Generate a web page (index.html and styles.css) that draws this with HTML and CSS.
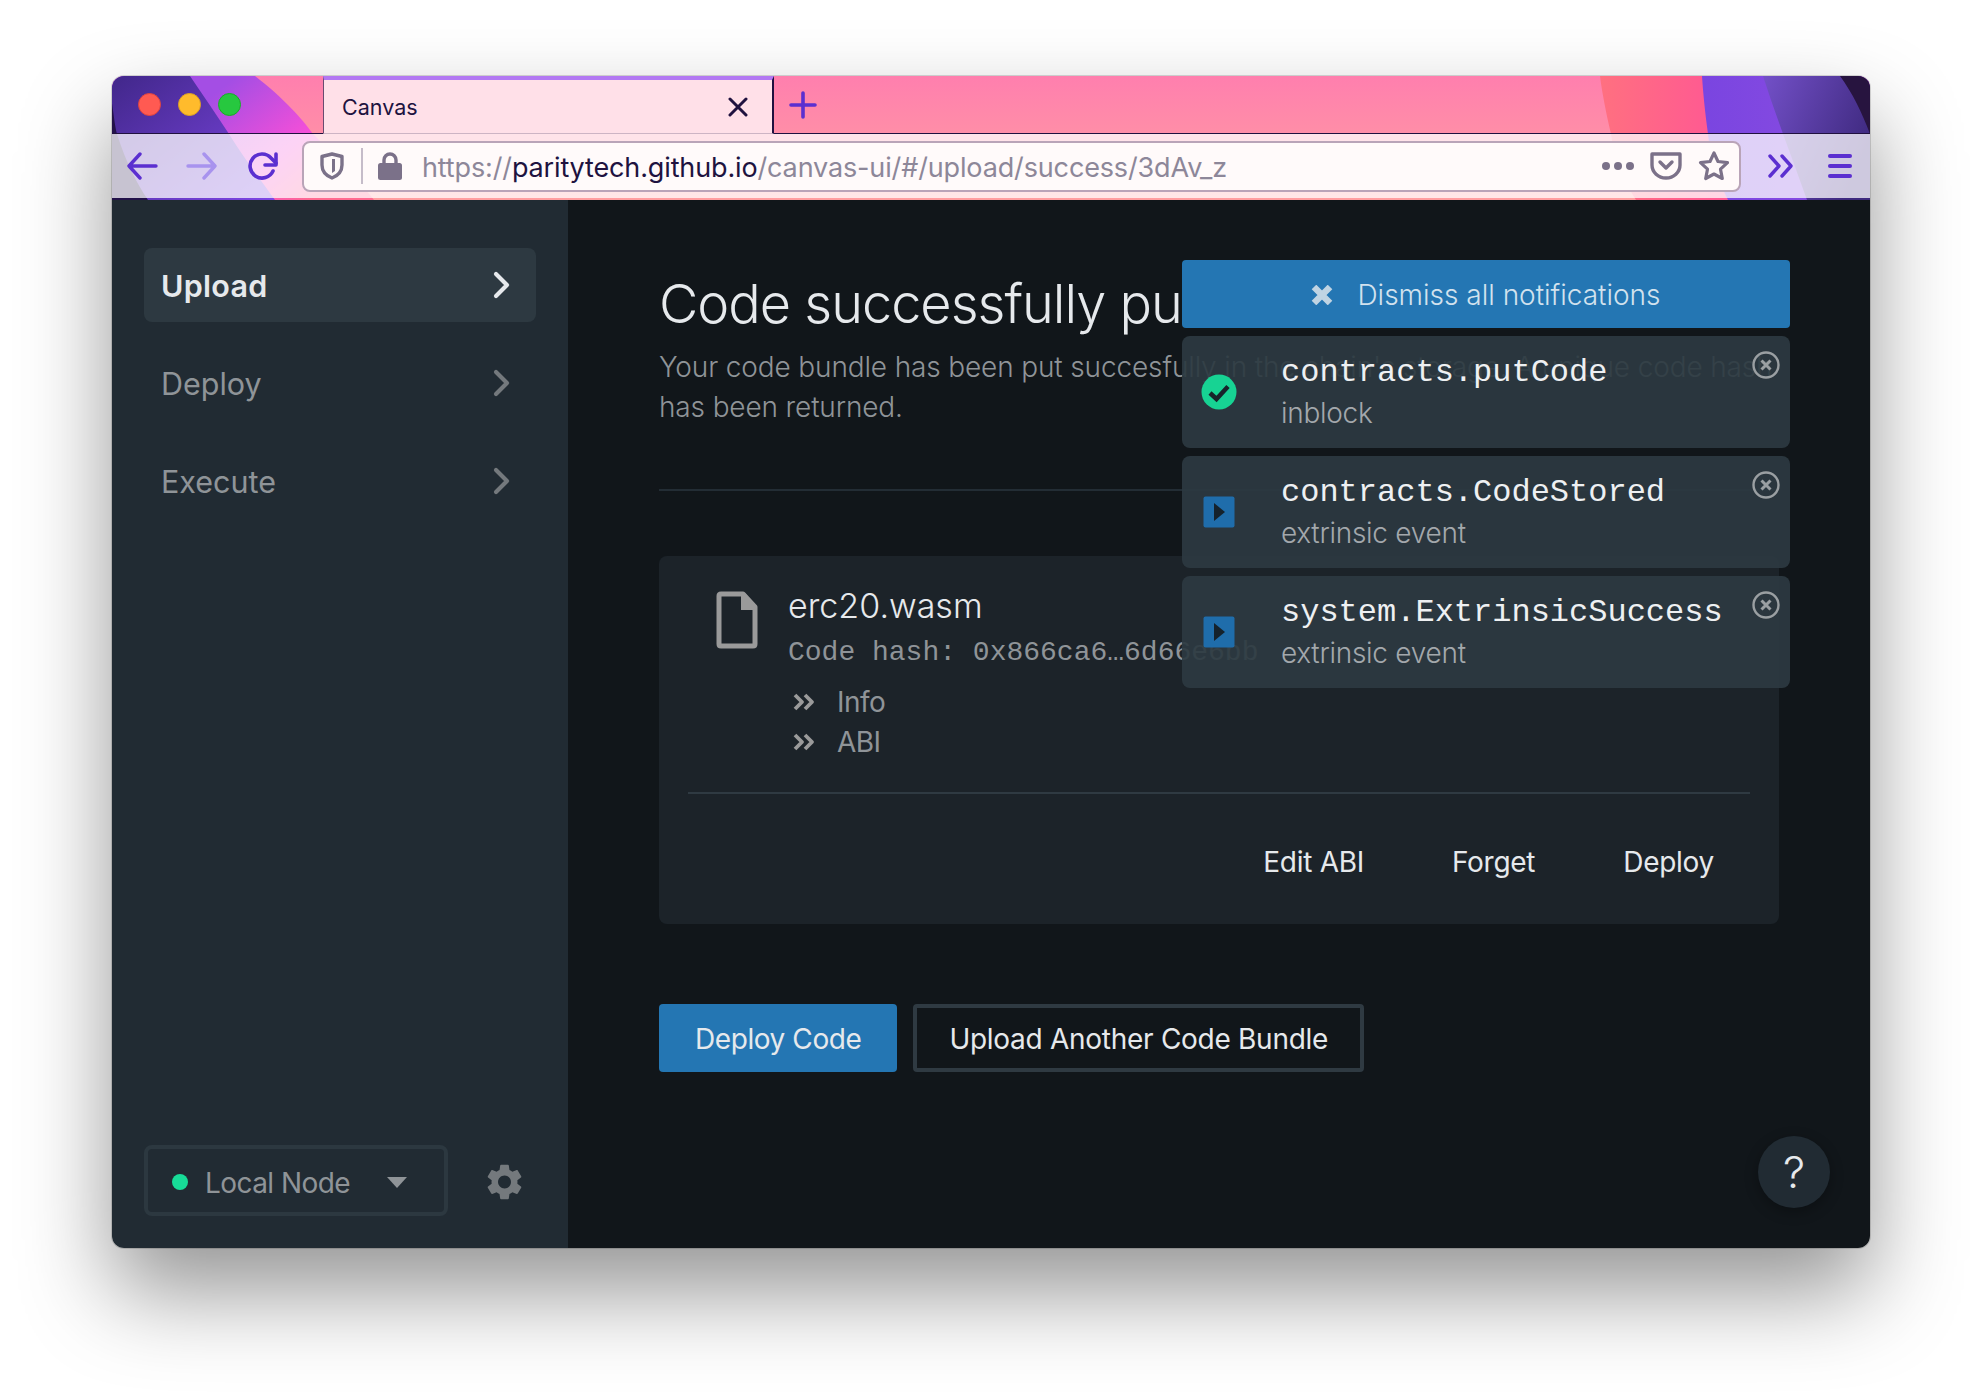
FILE: index.html
```html
<!DOCTYPE html>
<html lang="en">
<head>
<meta charset="UTF-8">
<meta name="viewport" content="width=device-width, initial-scale=1.0">
<title>Canvas</title>
<link rel="stylesheet" href="styles.css">
</head>
<body>

<div class="window">
    <header class="chrome">
        <svg class="chrome-art" viewBox="0 0 1758 122" preserveAspectRatio="none">
            <defs>
                <linearGradient id="artBase" x1="0" y1="0" x2="0" y2="1"><stop offset="0" stop-color="#ff7fae"/><stop offset="1" stop-color="#ff9fa0"/></linearGradient>
                <linearGradient id="artMagenta" x1="0" y1="0" x2="1" y2="0.6"><stop offset="0.35" stop-color="#a44ee4"/><stop offset="0.75" stop-color="#f44fd8"/><stop offset="1" stop-color="#ff6a90"/></linearGradient>
                <linearGradient id="artPurple" x1="0" y1="0" x2="1" y2="1"><stop offset="0" stop-color="#41278a"/><stop offset="1" stop-color="#7f47e6"/></linearGradient>
                <linearGradient id="artCoral" x1="0" y1="0" x2="1" y2="0"><stop offset="0" stop-color="#ff7080"/><stop offset="0.7" stop-color="#ff4a9e"/></linearGradient>
                <linearGradient id="artViolet" x1="0" y1="0" x2="1" y2="0"><stop offset="0" stop-color="#7a45e0"/><stop offset="1" stop-color="#8c4de2"/></linearGradient>
                <linearGradient id="artDusk" x1="0" y1="0" x2="1" y2="0.5"><stop offset="0" stop-color="#7350c8"/><stop offset="1" stop-color="#3f2a80"/></linearGradient>
            </defs>
            <rect width="1758" height="122" fill="url(#artBase)"/>
            <path d="M0 0H143C172 22 190 42 201 57C225 80 245 100 262 122H0Z" fill="url(#artMagenta)"/>
            <path d="M0 0H78C92 20 104 38 117 57C135 85 150 104 163 122H0Z" fill="url(#artPurple)"/>
            <path d="M0 27C2 40 3 50 5 57C14 85 24 104 36 122H0Z" fill="#23124a"/>
            <path d="M1488 0H1758V122H1524C1510 100 1502 78 1499 57C1494 36 1490 16 1488 0Z" fill="url(#artCoral)"/>
            <path d="M1590 0H1758V122H1616C1605 100 1598 78 1596 57C1593 36 1591 16 1590 0Z" fill="url(#artViolet)"/>
            <path d="M1651 0H1758V122H1695C1680 80 1664 40 1651 0Z" fill="url(#artDusk)"/>
            <path d="M1728 0H1758V57C1750 36 1740 16 1728 0Z" fill="#27143f"/>
        </svg>

        <div class="tabstrip">
            <div class="lights">
                <span class="light light-red"></span>
                <span class="light light-yellow"></span>
                <span class="light light-green"></span>
            </div>
            <div class="tab">
                <span class="tab-title">Canvas</span>
                <svg class="tab-close" viewBox="0 0 20 20"><path d="M2 2L18 18M18 2L2 18" fill="none" stroke="#20123f" stroke-width="3" stroke-linecap="round"/></svg>
            </div>
            <svg class="tab-new" viewBox="0 0 28 28"><path d="M14 2V26M2 14H26" fill="none" stroke="#5b2fd0" stroke-width="3.6" stroke-linecap="round"/></svg>
        </div>

        <div class="toolbar">
            <svg class="tool tool-back" viewBox="0 0 32 28"><path d="M3 14H30M14 2L3 14L14 26" fill="none" stroke="#5b2fd0" stroke-width="3.4" stroke-linecap="round" stroke-linejoin="round"/></svg>
            <svg class="tool tool-forward" viewBox="0 0 32 28"><path d="M2 14H29M18 2L29 14L18 26" fill="none" stroke="#a893ee" stroke-width="3.4" stroke-linecap="round" stroke-linejoin="round"/></svg>
            <svg class="tool tool-reload" viewBox="0 0 32 28"><path d="M26 19A12 12 0 1 1 24 6L29 11" fill="none" stroke="#5b2fd0" stroke-width="3.6" stroke-linecap="round"/><path d="M29 2V13H18" fill="none" stroke="#5b2fd0" stroke-width="3.6" stroke-linecap="round" stroke-linejoin="round"/></svg>
            <div class="urlbar">
                <svg class="url-shield" viewBox="0 0 24 28"><path d="M12 2L22 4.500V13C22 20 17 24 12 26C7 24 2 20 2 13V4.500Z" fill="none" stroke="#7b7189" stroke-width="3.4" stroke-linejoin="round"/><path d="M12 7H15V19L12 21Z" fill="#7b7189"/></svg>
                <span class="url-sep"></span>
                <svg class="url-lock" viewBox="0 0 24 28"><path d="M6 12V8A6 6 0 0 1 18 8V12" fill="none" stroke="#7b7189" stroke-width="3.4"/><rect x="0" y="11" width="24" height="17" rx="2.500" fill="#7b7189"/></svg>
                <span class="url-text">https://<b>paritytech.github.io</b>/canvas-ui/#/upload/success/3dAv_z</span>
                <span class="url-dots"><i></i><i></i><i></i></span>
                <svg class="url-pocket" viewBox="0 0 32 28"><path d="M2 2H30V13A14 13 0 0 1 2 13Z" fill="none" stroke="#7b7189" stroke-width="3.4" stroke-linejoin="round"/><path d="M10 10L16 16L22 10" fill="none" stroke="#7b7189" stroke-width="3.4" stroke-linecap="round" stroke-linejoin="round"/></svg>
                <svg class="url-star" viewBox="0 0 32 32"><path d="M16 3L20 11.500L29.500 12.700L22.500 19.200L24.300 28.500L16 24L7.700 28.500L9.500 19.200L2.500 12.700L12 11.500Z" fill="none" stroke="#7b7189" stroke-width="3.2" stroke-linejoin="round"/></svg>
            </div>
            <svg class="tool-more" viewBox="0 0 26 24"><path d="M2 2L11 12L2 22M14 2L23 12L14 22" fill="none" stroke="#5b2fd0" stroke-width="3.4" stroke-linecap="round" stroke-linejoin="round"/></svg>
            <span class="tool-menu"><i></i><i></i><i></i></span>
        </div>
    </header>

    <div class="app">
        <aside class="sidebar">
            <nav class="nav">
                <a class="nav-item nav-item-active">Upload<svg class="nav-chevron" viewBox="0 0 16 28"><path d="M2.500 3L13.500 14L2.500 25" fill="none" stroke="currentColor" stroke-width="4.200" stroke-linecap="round" stroke-linejoin="round"/></svg></a>
                <a class="nav-item">Deploy<svg class="nav-chevron" viewBox="0 0 16 28"><path d="M2.500 3L13.500 14L2.500 25" fill="none" stroke="currentColor" stroke-width="4.200" stroke-linecap="round" stroke-linejoin="round"/></svg></a>
                <a class="nav-item">Execute<svg class="nav-chevron" viewBox="0 0 16 28"><path d="M2.500 3L13.500 14L2.500 25" fill="none" stroke="currentColor" stroke-width="4.200" stroke-linecap="round" stroke-linejoin="round"/></svg></a>
            </nav>
            <div class="side-footer">
                <div class="node-select">
                    <span class="node-dot"></span>
                    <span class="node-name">Local Node</span>
                    <span class="node-caret"></span>
                </div>
                <svg class="gear" viewBox="2.400 2 19.200 20"><path d="M19.140 12.940c.04-.3.06-.61.06-.94 0-.32-.02-.64-.07-.94l2.030-1.580c.18-.14.23-.41.12-.61l-1.920-3.320c-.12-.22-.37-.29-.59-.22l-2.390.96c-.5-.38-1.030-.7-1.620-.94l-.36-2.540c-.04-.24-.24-.41-.48-.41h-3.840c-.24 0-.43.17-.47.41l-.36 2.540c-.59.24-1.130.57-1.620.94l-2.390-.96c-.22-.08-.47 0-.59.22L2.740 8.870c-.12.21-.08.47.12.61l2.030 1.580c-.05.3-.09.63-.09.94s.02.64.07.94l-2.030 1.580c-.18.14-.23.41-.12.61l1.920 3.320c.12.22.37.29.59.22l2.390-.96c.5.38 1.030.7 1.620.94l.36 2.540c.05.24.24.41.48.41h3.840c.24 0 .44-.17.47-.41l.36-2.540c.59-.24 1.130-.56 1.620-.94l2.390.96c.22.08.47 0 .59-.22l1.920-3.320c.12-.22.07-.47-.12-.61l-2.010-1.580zM12 15.600c-1.980 0-3.600-1.620-3.600-3.600s1.620-3.600 3.600-3.600 3.600 1.620 3.600 3.600-1.620 3.600-3.600 3.600z" fill="#74797d"/></svg>
            </div>
        </aside>

        <main class="content">
            <h1 class="page-title">Code successfully put on-chain</h1>
            <p class="page-desc">Your code bundle has been put succesfully in the chain's storage. A unique code hash has been returned.</p>
            <hr class="page-rule">

            <section class="bundle">
                <div class="bundle-head">
                    <svg class="file-icon" viewBox="0 0 42 58"><path d="M3 5Q3 3 5 3H27L39 16V53Q39 55 37 55H5Q3 55 3 53Z" fill="none" stroke="#9a9a9a" stroke-width="5" stroke-linejoin="round"/><path d="M25 2H29L40 15V19H25Z" fill="#9a9a9a"/></svg>
                    <div class="bundle-info">
                        <div class="bundle-name">erc20.wasm</div>
                        <div class="bundle-hash">Code hash: 0x866ca6…6d66e6bb</div>
                        <div class="bundle-link"><svg class="double-chevron" viewBox="0 0 22 18"><path d="M2 2L9 9L2 16M12 2L19 9L12 16" fill="none" stroke="#9a9a9a" stroke-width="3.800" stroke-linejoin="round"/></svg>Info</div>
                        <div class="bundle-link"><svg class="double-chevron" viewBox="0 0 22 18"><path d="M2 2L9 9L2 16M12 2L19 9L12 16" fill="none" stroke="#9a9a9a" stroke-width="3.800" stroke-linejoin="round"/></svg>ABI</div>
                    </div>
                </div>
                <div class="bundle-actions">
                    <a class="action">Edit ABI</a>
                    <a class="action">Forget</a>
                    <a class="action">Deploy</a>
                </div>
            </section>

            <div class="buttons">
                <button class="btn btn-primary">Deploy Code</button>
                <button class="btn btn-outline">Upload Another Code Bundle</button>
            </div>
        </main>
    </div>

    <div class="notifications">
        <div class="dismiss-all">
            <svg class="dismiss-x" viewBox="0 0 22 20"><path d="M3 2L19 18M19 2L3 18" fill="none" stroke="#c0d4e3" stroke-width="6.500"/></svg>
            Dismiss all notifications
        </div>
        <div class="notice">
            <svg class="notice-icon" viewBox="0 0 36 36"><circle cx="18" cy="18" r="17.500" fill="#17d393"/><path d="M9 19L15.500 25L27 12.500" fill="none" stroke="#18232a" stroke-width="4.500"/></svg>
            <div class="notice-body">
                <div class="notice-title">contracts.putCode</div>
                <div class="notice-sub">inblock</div>
            </div>
            <svg class="notice-close" viewBox="0 0 28 28"><circle cx="14" cy="14" r="12.500" fill="none" stroke="#9a9fa2" stroke-width="2.400"/><path d="M9.500 9.500L18.500 18.500M18.500 9.500L9.500 18.500" fill="none" stroke="#9a9fa2" stroke-width="3"/></svg>
        </div>
        <div class="notice">
            <svg class="notice-icon" viewBox="0 0 36 36"><rect x="2.500" y="2.500" width="31" height="31" rx="2" fill="#1f6dab"/><path d="M13 9L24 18L13 27Z" fill="#15222c"/></svg>
            <div class="notice-body">
                <div class="notice-title">contracts.CodeStored</div>
                <div class="notice-sub">extrinsic event</div>
            </div>
            <svg class="notice-close" viewBox="0 0 28 28"><circle cx="14" cy="14" r="12.500" fill="none" stroke="#9a9fa2" stroke-width="2.400"/><path d="M9.500 9.500L18.500 18.500M18.500 9.500L9.500 18.500" fill="none" stroke="#9a9fa2" stroke-width="3"/></svg>
        </div>
        <div class="notice">
            <svg class="notice-icon" viewBox="0 0 36 36"><rect x="2.500" y="2.500" width="31" height="31" rx="2" fill="#1f6dab"/><path d="M13 9L24 18L13 27Z" fill="#15222c"/></svg>
            <div class="notice-body">
                <div class="notice-title">system.ExtrinsicSuccess</div>
                <div class="notice-sub">extrinsic event</div>
            </div>
            <svg class="notice-close" viewBox="0 0 28 28"><circle cx="14" cy="14" r="12.500" fill="none" stroke="#9a9fa2" stroke-width="2.400"/><path d="M9.500 9.500L18.500 18.500M18.500 9.500L9.500 18.500" fill="none" stroke="#9a9fa2" stroke-width="3"/></svg>
        </div>
    </div>

    <button class="help">?</button>
</div>

</body>
</html>
```

FILE: styles.css
```css
* {
    box-sizing: border-box;
}
body {
    margin: 0;
    height: 1396px;
    padding: 76px 112px 0;
    background: #fff;
    font-family: Inter, "Noto Sans", sans-serif;
    overflow: hidden;
}
svg {
    display: block;
    flex: none;
}

.window {
    position: relative;
    height: 1172px;
    display: flex;
    flex-direction: column;
    border-radius: 12px;
    overflow: hidden;
    box-shadow: 0 44px 90px rgba(0, 0, 0, 0.42), 0 0 0 1px rgba(0, 0, 0, 0.14);
}

/* browser chrome */
.chrome {
    position: relative;
    height: 124px;
    flex: none;
}
.chrome-art {
    position: absolute;
    inset: 0;
    width: 100%;
    height: 100%;
}
.tabstrip {
    position: relative;
    height: 58px;
    display: flex;
    align-items: stretch;
    border-bottom: 1px solid #20103f;
}
.lights {
    width: 211px;
    flex: none;
    display: flex;
    align-items: center;
    gap: 17px;
    padding-left: 26px;
}
.light {
    width: 23px;
    height: 23px;
    border-radius: 50%;
}
.light-red {
    background: #ff5a52;
    border: 1px solid #e0443e;
}
.light-yellow {
    background: #ffbb2c;
    border: 1px solid #dea123;
}
.light-green {
    background: #27c83f;
    border: 1px solid #1aab29;
}
.tab {
    width: 451px;
    flex: none;
    display: flex;
    align-items: center;
    justify-content: space-between;
    margin-bottom: -1px;
    padding: 1px 24px 0 18px;
    background: #ffe0e8;
    border-top: 4px solid #b278f2;
    border-left: 1px solid #6a4a70;
    border-right: 2px solid #20103f;
    border-bottom: 1px solid #cdb4c4;
    color: #20123f;
    font-size: 21.500px;
}
.tab-close {
    width: 20px;
    height: 20px;
}
.tab-new {
    width: 28px;
    height: 28px;
    margin: 15px 0 0 15px;
}
.toolbar {
    position: relative;
    height: 64px;
    display: flex;
    align-items: center;
    padding-left: 14px;
    background: rgba(255, 255, 255, 0.75);
}
.tool {
    width: 32px;
    height: 28px;
}
.tool-forward {
    margin-left: 28px;
}
.tool-reload {
    margin-left: 29px;
}
.urlbar {
    width: 1439px;
    height: 51px;
    margin-left: 23px;
    display: flex;
    align-items: center;
    padding: 0 9px 0 16px;
    background: #fffafa;
    border: 2px solid #b9a4b8;
    border-radius: 8px;
}
.url-shield {
    width: 24px;
    height: 28px;
}
.url-sep {
    width: 2px;
    height: 36px;
    margin: 0 15px 0 17px;
    background: #c5bcc9;
}
.url-lock {
    width: 24px;
    height: 28px;
}
.url-text {
    flex: 1;
    margin-left: 20px;
    padding-top: 2px;
    color: #8d8799;
    font-size: 27px;
    letter-spacing: -0.14px;
    white-space: nowrap;
}
.url-text b {
    color: #20123f;
    font-weight: 400;
}
.url-dots {
    display: flex;
    gap: 4px;
    margin-right: 16px;
}
.url-dots i {
    width: 8px;
    height: 8px;
    border-radius: 50%;
    background: #7b7189;
}
.url-pocket {
    width: 32px;
    height: 28px;
    margin-right: 16px;
}
.url-star {
    width: 32px;
    height: 32px;
}
.tool-more {
    width: 26px;
    height: 24px;
    margin-left: 27px;
}
.tool-menu {
    display: flex;
    flex-direction: column;
    gap: 6px;
    width: 24px;
    margin-left: 34px;
}
.tool-menu i {
    height: 4px;
    border-radius: 2px;
    background: #5b2fd0;
}

/* app */
.app {
    flex: 1;
    display: flex;
    min-height: 0;
}
.sidebar {
    width: 456px;
    flex: none;
    display: flex;
    flex-direction: column;
    justify-content: space-between;
    padding: 48px 32px 32px;
    background: #212b33;
}
.nav {
    display: flex;
    flex-direction: column;
    gap: 24px;
}
.nav-item {
    height: 74px;
    display: flex;
    align-items: center;
    justify-content: space-between;
    padding: 0 26px 0 17px;
    border-radius: 8px;
    color: #8f9498;
    font-size: 30.500px;
}
.nav-item .nav-chevron {
    color: #74797d;
}
.nav-item-active {
    background: #2d3941;
    color: #e6e9ec;
    font-weight: 600;
    letter-spacing: 0.3px;
}
.nav-item-active .nav-chevron {
    color: #e6e9ec;
}
.nav-chevron {
    width: 17px;
    height: 28px;
}
.side-footer {
    display: flex;
    align-items: center;
}
.node-select {
    width: 304px;
    height: 71px;
    display: flex;
    align-items: center;
    padding: 3px 37px 0 24px;
    border: 4px solid #2c3840;
    border-radius: 8px;
    color: #8f9498;
    font-size: 28px;
    letter-spacing: -0.02em;
}
.node-dot {
    width: 16px;
    height: 16px;
    margin: 0 17px 1px 0;
    border-radius: 50%;
    background: #17dc98;
}
.node-name {
    flex: 1;
    padding-top: 2px;
}
.node-caret {
    width: 0;
    height: 0;
    border-left: 10px solid transparent;
    border-right: 10px solid transparent;
    border-top: 11px solid #8f9498;
}
.gear {
    width: 35px;
    height: 36px;
    margin: 3px 0 0 39px;
}

/* main column */
.content {
    flex: 1;
    min-width: 0;
    padding: 69px 91px 0 91px;
    background: #11161a;
}
.page-title {
    margin: 0;
    color: #e6e9ec;
    font-size: 54px;
    font-weight: 300;
    letter-spacing: -1px;
    line-height: 70px;
    white-space: nowrap;
}
.page-desc {
    margin: 8px 0 0;
    color: #8f9498;
    font-size: 28px;
    font-weight: 300;
    letter-spacing: -0.005em;
    line-height: 40px;
}
.page-rule {
    margin: 62px 0 65px;
    border: 0;
    border-top: 2px solid #232d35;
}
.bundle {
    height: 368px;
    padding: 0 29px;
    background: #1c2329;
    border-radius: 8px;
}
.bundle-head {
    height: 238px;
    display: flex;
    padding: 35px 0 0 28px;
    border-bottom: 2px solid #2f3a42;
}
.file-icon {
    width: 42px;
    height: 58px;
}
.bundle-info {
    margin-left: 30px;
    min-width: 0;
    white-space: nowrap;
}
.bundle-name {
    margin-top: -6px;
    color: #e6e9ec;
    font-size: 34px;
    font-weight: 300;
    line-height: 42px;
}
.bundle-hash {
    margin: 6px 0 9px;
    color: #8f9498;
    font-family: "Liberation Mono", monospace;
    font-size: 28px;
    line-height: 40px;
}
.bundle-link {
    height: 40px;
    display: flex;
    align-items: center;
    color: #8f9498;
    font-size: 28px;
    letter-spacing: -0.02em;
}
.double-chevron {
    width: 22px;
    height: 18px;
    margin: 0 22px 0 5px;
}
.bundle-actions {
    display: flex;
    justify-content: flex-end;
    gap: 88px;
    padding: 51px 36px 0 0;
    color: #e6e9ec;
    font-size: 28px;
    letter-spacing: -0.01em;
}
.buttons {
    display: flex;
    gap: 16px;
    margin-top: 80px;
}
.btn {
    height: 68px;
    padding: 2px 36px 0;
    border: 0;
    border-radius: 4px;
    color: #e6e9ec;
    font-family: Inter, "Noto Sans", sans-serif;
    font-size: 28px;
    letter-spacing: -0.015em;
}
.btn-primary {
    background: #2476b3;
}
.btn-outline {
    background: transparent;
    border: 4px solid #2f3a42;
    padding: 2px 32px 0;
    letter-spacing: -0.01em;
}

/* overlays */
.notifications {
    position: absolute;
    top: 184px;
    left: 1070px;
    width: 608px;
    display: flex;
    flex-direction: column;
    gap: 8px;
}
.dismiss-all {
    height: 68px;
    display: flex;
    align-items: center;
    justify-content: center;
    gap: 24px;
    padding-top: 1px;
    background: #2476b3;
    border-radius: 4px;
    color: #d2e2ee;
    font-size: 28px;
    font-weight: 300;
}
.dismiss-x {
    width: 22px;
    height: 20px;
}
.notice {
    position: relative;
    height: 112px;
    display: flex;
    align-items: center;
    padding-left: 19px;
    background: rgba(45, 57, 65, 0.92);
    border-radius: 8px;
}
.notice-icon {
    width: 36px;
    height: 36px;
}
.notice-body {
    margin: 3px 0 0 44px;
    white-space: nowrap;
}
.notice-title {
    color: #eef0f2;
    font-family: "Liberation Mono", monospace;
    font-size: 32px;
    line-height: 40px;
}
.notice-sub {
    color: #a3a8ac;
    font-size: 28px;
    font-weight: 300;
    letter-spacing: -0.01em;
    line-height: 41px;
}
.notice-close {
    position: absolute;
    top: 15px;
    right: 10px;
    width: 28px;
    height: 28px;
}
.help {
    position: absolute;
    right: 40px;
    bottom: 40px;
    width: 72px;
    height: 72px;
    padding: 0;
    border: 0;
    border-radius: 50%;
    background: #212b33;
    box-shadow: 0 4px 14px rgba(0, 0, 0, 0.3);
    color: #e6e9ec;
    font-family: Inter, "Noto Sans", sans-serif;
    font-size: 44px;
    font-weight: 300;
}
```
